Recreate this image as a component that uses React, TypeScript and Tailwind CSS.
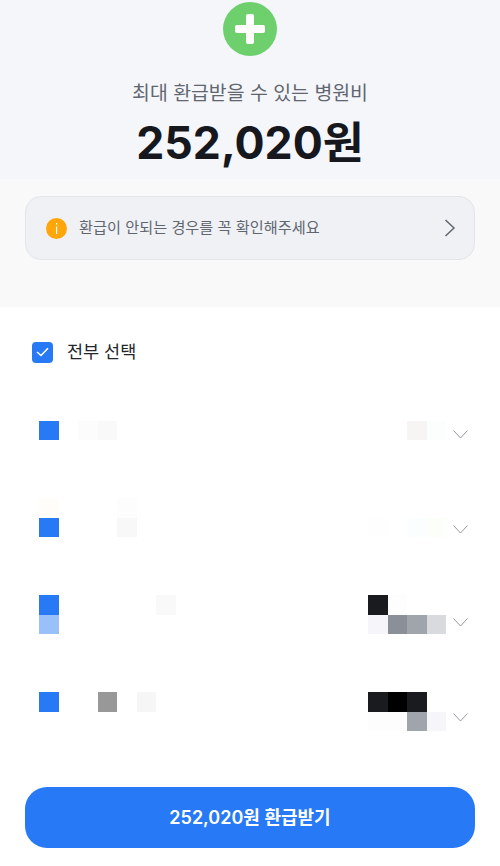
const font = "[font-family:Inter,'Noto_Sans_CJK_KR',sans-serif]";

type Cell = { col: number; color: string };
type ItemRow = {
  left: Cell[][];
  right: Cell[][];
  chevronClass: string;
};

// blurred (mosaic) rows, cells are about 19.5px wide
const rows: ItemRow[] = [
  {
    left: [[
      { col: 0, color: "bg-[#2779f5]" },
      { col: 2, color: "bg-[#fcfcfc]" },
      { col: 3, color: "bg-[#f9f9f9]" },
    ]],
    right: [[
      { col: 2, color: "bg-[#f6f5f4]" },
      { col: 3, color: "bg-[#fcfdfd]" },
    ]],
    chevronClass: "mt-[9px]",
  },
  {
    left: [
      [
        { col: 0, color: "bg-[#fffdfa]" },
        { col: 4, color: "bg-[#fdfdfd]" },
      ],
      [
        { col: 0, color: "bg-[#2779f5]" },
        { col: 4, color: "bg-[#f8f8f8]" },
      ],
    ],
    right: [
      [],
      [
        { col: 0, color: "bg-[#fefefe]" },
        { col: 2, color: "bg-[#fbfeff]" },
        { col: 3, color: "bg-[#fcfef9]" },
      ],
    ],
    chevronClass: "mt-[27px]",
  },
  {
    left: [
      [
        { col: 0, color: "bg-[#2779f5]" },
        { col: 6, color: "bg-[#f9f9f9]" },
      ],
      [{ col: 0, color: "bg-[#99c0f9]" }],
    ],
    right: [
      [
        { col: 0, color: "bg-[#1a1b1f]" },
        { col: 1, color: "bg-[#fdfdfd]" },
      ],
      [
        { col: 0, color: "bg-[#f6f6fa]" },
        { col: 1, color: "bg-[#8b9098]" },
        { col: 2, color: "bg-[#a0a4ab]" },
        { col: 3, color: "bg-[#d9dade]" },
      ],
    ],
    chevronClass: "mt-[23px]",
  },
  {
    left: [
      [
        { col: 0, color: "bg-[#2779f5]" },
        { col: 3, color: "bg-[#989898]" },
        { col: 5, color: "bg-[#f6f6f6]" },
      ],
      [],
    ],
    right: [
      [
        { col: 0, color: "bg-[#1a1b1f]" },
        { col: 1, color: "bg-[#000000]" },
        { col: 2, color: "bg-[#1a1b1f]" },
      ],
      [
        { col: 0, color: "bg-[#fdfdfe]" },
        { col: 1, color: "bg-[#fdfdfe]" },
        { col: 2, color: "bg-[#a0a4ab]" },
        { col: 3, color: "bg-[#f6f6fa]" },
      ],
    ],
    chevronClass: "mt-[21px]",
  },
];

function Mosaic({ lines, cols }: { lines: Cell[][]; cols: number }) {
  return (
    <div className="flex flex-col">
      {lines.map((line, i) => (
        <div key={i} className="flex h-[19.5px]">
          {Array.from({ length: cols }).map((_, c) => {
            const cell = line.find((x) => x.col === c);
            return <div key={c} className={`w-[19.5px] h-full ${cell ? cell.color : ""}`} />;
          })}
        </div>
      ))}
    </div>
  );
}

function Chevron({ className }: { className: string }) {
  return (
    <svg width="15" height="9" viewBox="0 0 15 9" fill="none" stroke="#94979d" strokeWidth="1" className={className}>
      <path d="M0.5 0.5 L7.5 8 L14.5 0.5" />
    </svg>
  );
}

export default function App() {
  return (
    <div className={`w-[500px] h-[866px] bg-white flex flex-col overflow-hidden ${font}`}>
      {/* Amount */}
      <div className="h-[179px] bg-[#f5f6fa] flex flex-col items-center pt-[2px]">
        <div className="relative w-[54px] h-[54px] rounded-full bg-[#6dd06d]">
          <div className="absolute left-[12px] top-[23px] w-[30px] h-[8px] rounded-[2px] bg-white" />
          <div className="absolute left-[23px] top-[12px] w-[8px] h-[30px] rounded-[2px] bg-white" />
        </div>
        <p className="mt-[22px] text-[19.4px] leading-[30px] text-[#5f6670]">최대 환급받을 수 있는 병원비</p>
        <p className="mt-[6px] text-[44.6px] leading-[58px] font-bold text-[#16181d]">252,020원</p>
      </div>

      {/* Notice */}
      <div className="h-[128px] bg-[#f9f9f9] px-[25px] pt-[17px]">
        <div className="h-[64px] rounded-[16px] border border-[#e3e5ea] bg-[#f0f1f5] flex items-center pl-[20px] pr-[18px]">
          <div className="w-[21px] h-[21px] rounded-full bg-[#ffa60a] flex items-center justify-center">
            <svg width="3" height="11" viewBox="0 0 3 11" fill="#ffffff">
              <rect x="1" y="0" width="1.2" height="1.6" />
              <rect x="1" y="3.5" width="1.2" height="7.5" />
            </svg>
          </div>
          <p className="ml-[12px] flex-1 text-[15.2px] leading-[24px] text-[#5f6670]">환급이 안되는 경우를 꼭 확인해주세요</p>
          <svg width="12" height="18" viewBox="0 0 12 18" fill="none" stroke="#5f6670" strokeWidth="1.5">
            <path d="M1.5 1 L10 9 L1.5 17" />
          </svg>
        </div>
      </div>

      {/* Select all */}
      <div className="flex items-center pl-[32px] mt-[34px] h-[22px]">
        <div className="w-[21px] h-[21px] rounded-[4px] bg-[#2779f5] flex items-center justify-center">
          <svg width="13" height="10" viewBox="0 0 13 10" fill="none" stroke="#ffffff" strokeWidth="1.6">
            <path d="M1 5 L5 8.5 L12 1.2" />
          </svg>
        </div>
        <span className="ml-[14px] text-[17.5px] font-normal text-[#24262b]">전부 선택</span>
      </div>

      {/* Items */}
      <div className="mt-[57.5px] flex flex-col gap-[58px] pl-[39px] pr-[32px]">
        {rows.map((row, i) => (
          <div key={i} className="flex items-start">
            <Mosaic lines={row.left} cols={7} />
            <div className="flex-1" />
            <Mosaic lines={row.right} cols={4} />
            <Chevron className={`ml-[7px] ${row.chevronClass}`} />
          </div>
        ))}
      </div>

      {/* Button */}
      <div className="mt-[56px] px-[25px]">
        <button className="w-full h-[61px] rounded-[22px] bg-[#2779f5] text-white text-[18px] font-semibold">
          252,020원 환급받기
        </button>
      </div>
    </div>
  );
}
